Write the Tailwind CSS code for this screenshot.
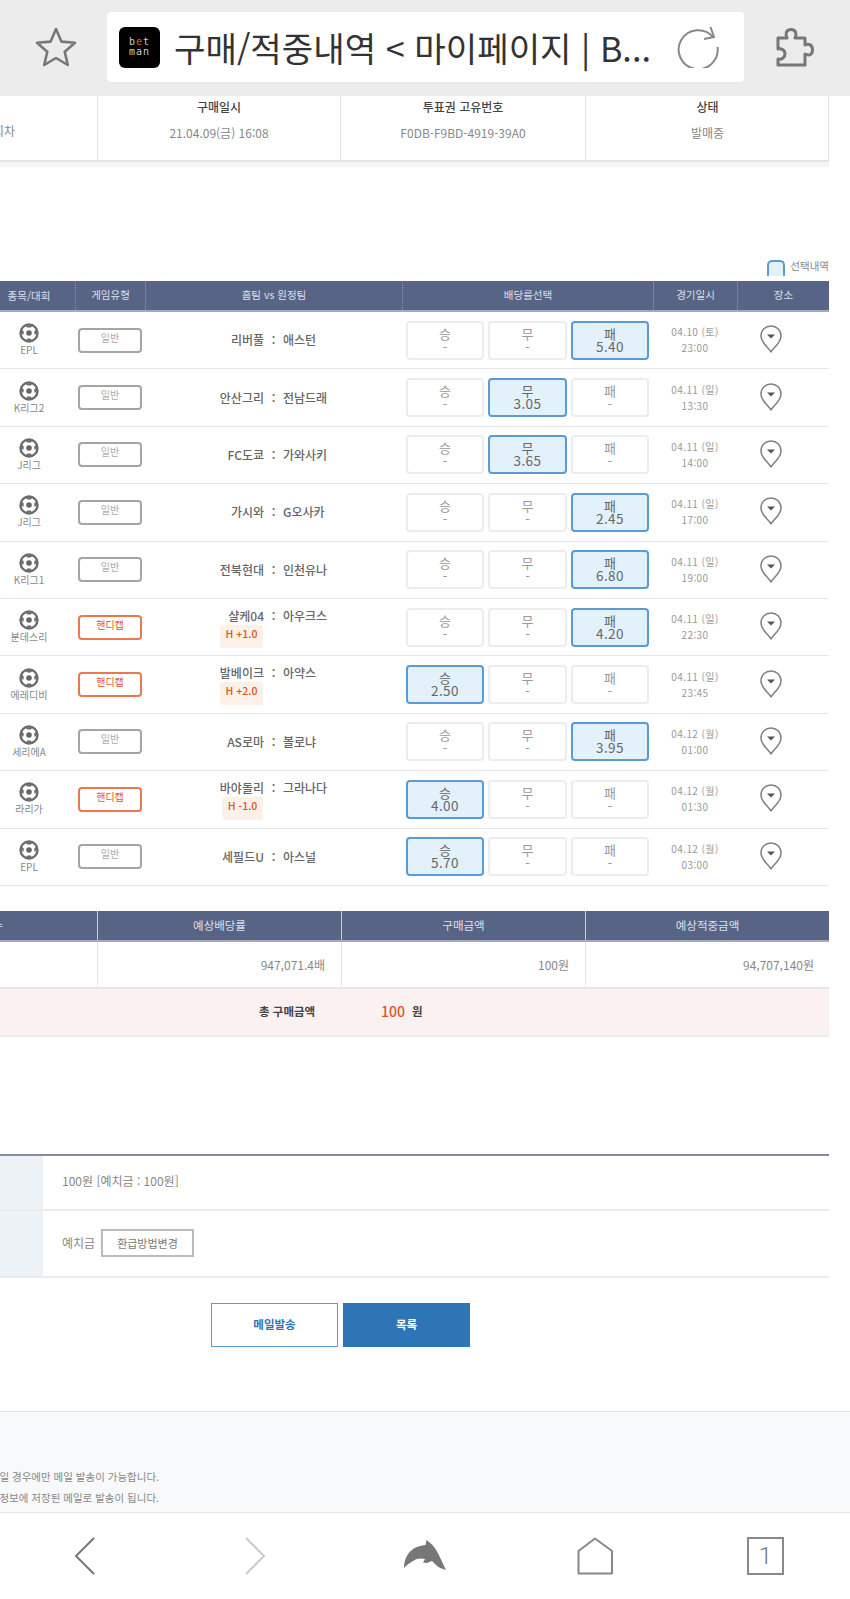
<!DOCTYPE html>
<html lang="ko">
  <head>
    <meta charset="UTF-8" />
    <meta name="viewport" content="width=device-width, initial-scale=1.0" />
    <title>구매/적중내역 &lt; 마이페이지 | Betman</title>
    <script src="https://cdn.jsdelivr.net/npm/@tailwindcss/browser@4"></script>
  </head>
  <body class="bg-white">
    <svg class="hidden">
      <symbol id="ball" viewBox="0 0 20 20">
        <circle cx="10" cy="10" r="8.5" fill="#fff" stroke="#6b6b6b" stroke-width="2.4" />
        <circle cx="10" cy="10" r="2.8" fill="#666" />
        <path d="M6.500 2.500 L8.200 4.500 H11.800 L13.500 2.500 Z M2 10 L3.400 7 L4.800 8.500 L4.400 12 Z M18 10 L16.600 7 L15.200 8.500 L15.600 12 Z M7 17.400 L8.300 15.500 H11.700 L13 17.400 Z" fill="#6b6b6b" />
      </symbol>
      <symbol id="pin" viewBox="0 0 22 28">
        <path d="M11 27 C8.500 22.500 1 18 1 11 C1 5 5.500 1 11 1 C16.500 1 21 5 21 11 C21 18 13.500 22.500 11 27 Z" fill="#fff" stroke="#808080" stroke-width="1.500" stroke-linejoin="round" />
        <path d="M7 9.500 H15 L11 13.500 Z" fill="#555" />
      </symbol>
    </svg>

    <div class="w-[850px] h-[1599px] overflow-hidden flex flex-col text-[#888] font-['Noto_Sans_CJK_KR','Noto_Sans',sans-serif]">
      <!-- Browser toolbar -->
      <header class="h-[96px] shrink-0 bg-[#ececec] flex items-center pb-[2px]">
        <svg class="ml-[35px] w-[42px] h-[42px]" viewBox="0 0 42 42" fill="none" stroke="#777" stroke-width="2.6" stroke-linejoin="round">
          <path d="M21 3 L26.400 15.600 L40 16.800 L29.700 25.800 L32.800 39 L21 32 L9.200 39 L12.300 25.800 L2 16.800 L15.600 15.600 Z" />
        </svg>
        <div class="ml-[30px] w-[637px] h-[70px] bg-white rounded-[4px] flex items-center pl-[12px]">
          <div class="w-[41px] h-[41px] bg-black rounded-[6px] flex flex-col items-center justify-center font-['DejaVu_Sans_Mono',monospace] text-[10px] leading-[10px] text-[#ccc] tracking-[1px]">
            <span>b<span class="text-[#e0531f]">e</span>t</span>
            <span>man</span>
          </div>
          <span class="ml-[14px] w-[505px] text-[34.2px] leading-[44px] text-[#333] whitespace-nowrap">구매/적중내역 &lt; 마이페이지 | B...</span>
          <svg class="-ml-[2px] w-[42px] h-[42px]" viewBox="0 0 42 42" fill="none" stroke="#888" stroke-width="2">
            <path d="M40.500 21 A19.500 19.500 0 1 1 36 11" />
            <path d="M33.500 1 L37 11 L27 13" />
          </svg>
        </div>
        <svg class="ml-[32px] w-[38px] h-[39px]" viewBox="0 0 38 39" fill="none" stroke="#777" stroke-width="3" stroke-linejoin="round">
          <path d="M2 10 H11 C9 6 10 1.500 15 1.500 C20 1.500 21 6 19 10 H29 V17 C33 15 36.500 17 36.500 22 C36.500 27 33 28 29 26 V37 H2 V31 C6 32 9 29 9 26 C9 22 5 20 2 21 Z" />
        </svg>
      </header>

      <!-- Ticket summary -->
      <section class="w-[829px] shrink-0 h-[66px] grid grid-cols-[97px_243px_245px_244px] border-b-2 border-r border-[#e6e6e6] text-center">
        <div class="flex justify-end items-end pb-[20px] pr-[82px] text-[12px] whitespace-nowrap">회차</div>
        <div class="border-l border-[#e6e6e6]">
          <p class="mt-[2px] text-[12px] leading-[18px] font-medium text-[#444]">구매일시</p>
          <p class="mt-[8px] text-[12px] leading-[18px]">21.04.09(금) 16:08</p>
        </div>
        <div class="border-l border-[#e6e6e6]">
          <p class="mt-[2px] text-[12px] leading-[18px] font-medium text-[#444]">투표권 고유번호</p>
          <p class="mt-[8px] text-[12px] leading-[18px]">F0DB-F9BD-4919-39A0</p>
        </div>
        <div class="border-l border-[#e6e6e6]">
          <p class="mt-[2px] text-[12px] leading-[18px] font-medium text-[#444]">상태</p>
          <p class="mt-[8px] text-[12px] leading-[18px]">발매중</p>
        </div>
      </section>
      <div class="w-[829px] shrink-0 h-[5px] bg-[#f6f6f6]"></div>

      <!-- Legend -->
      <div class="w-[829px] shrink-0 mt-[93px] h-[21px] flex justify-end items-start gap-[5px] text-[10.5px] leading-[14px]">
        <span class="w-[18px] h-[16px] bg-[#e3f1fb] border-2 border-b-0 border-[#5b9bd5] rounded-t-[5px]"></span>
        <span class="-mt-[1px]">선택내역</span>
      </div>

      <!-- Match table -->
      <section class="w-[829px] shrink-0">
        <div class="h-[31px] grid grid-cols-[75px_70px_257px_251px_84px_92px] bg-[#586485] border-b-2 border-[#a5abbf] text-[10.5px] text-[#dde0e8] text-center items-center">
          <div class="w-[58px]">종목/대회</div>
          <div class="h-full leading-[28px] border-l border-dotted border-[#8a93ad]">게임유형</div>
          <div class="h-full leading-[28px] border-l border-[#77819f]">홈팀 vs 원정팀</div>
          <div class="h-full leading-[28px] border-l border-dotted border-[#8a93ad]">배당률선택</div>
          <div class="h-full leading-[28px] border-l border-[#77819f]">경기일시</div>
          <div class="h-full leading-[28px] border-l border-[#77819f]">장소</div>
        </div>

        <!-- 1 -->
        <div class="h-[57.4px] grid grid-cols-[75px_70px_257px_251px_84px_92px] items-center border-b border-[#e6e6e6]">
          <div class="w-[58px] flex flex-col items-center"><svg class="w-[20px] h-[20px]"><use href="#ball" /></svg><span class="text-[10px] leading-[14px]">EPL</span></div>
          <div class="pl-[3px]"><div class="w-[64px] h-[25px] border-2 border-[#a5a5a5] rounded-[4px] text-[10px] leading-[16px] text-center text-[#aaa]">일반</div></div>
          <div class="flex justify-center text-[12px] font-medium text-[#666]"><span class="w-[119px] text-right">리버풀</span><span class="w-[19px] text-center">:</span><span class="w-[119px]">애스턴</span></div>
          <div class="flex gap-[4px] pl-[4px] text-center text-[13px] leading-[13px]">
            <div class="w-[78px] h-[39px] border-2 border-[#ececec] rounded-[4px] pt-[4px] text-[#999]">승<br />-</div>
            <div class="w-[79px] h-[39px] border-2 border-[#ececec] rounded-[4px] pt-[4px] text-[#999]">무<br />-</div>
            <div class="w-[78px] h-[39px] border-2 border-[#5b9bd5] rounded-[4px] pt-[4px] bg-[#e3f1fb] text-[#666]">패<br /><span class="text-[13.5px] tracking-[0.4px]">5.40</span></div>
          </div>
          <div class="text-center text-[10px] leading-[16px] tracking-[0.4px] text-[#999]">04.10 (토)<br />23:00</div>
          <div class="flex justify-center pb-[2px]"><svg class="w-[22px] h-[28px] -ml-[24px]"><use href="#pin" /></svg></div>
        </div>
        <!-- 2 -->
        <div class="h-[57.4px] grid grid-cols-[75px_70px_257px_251px_84px_92px] items-center border-b border-[#e6e6e6]">
          <div class="w-[58px] flex flex-col items-center"><svg class="w-[20px] h-[20px]"><use href="#ball" /></svg><span class="text-[10px] leading-[14px]">K리그2</span></div>
          <div class="pl-[3px]"><div class="w-[64px] h-[25px] border-2 border-[#a5a5a5] rounded-[4px] text-[10px] leading-[16px] text-center text-[#aaa]">일반</div></div>
          <div class="flex justify-center text-[12px] font-medium text-[#666]"><span class="w-[119px] text-right">안산그리</span><span class="w-[19px] text-center">:</span><span class="w-[119px]">전남드래</span></div>
          <div class="flex gap-[4px] pl-[4px] text-center text-[13px] leading-[13px]">
            <div class="w-[78px] h-[39px] border-2 border-[#ececec] rounded-[4px] pt-[4px] text-[#999]">승<br />-</div>
            <div class="w-[79px] h-[39px] border-2 border-[#5b9bd5] rounded-[4px] pt-[4px] bg-[#e3f1fb] text-[#666]">무<br /><span class="text-[13.5px] tracking-[0.4px]">3.05</span></div>
            <div class="w-[78px] h-[39px] border-2 border-[#ececec] rounded-[4px] pt-[4px] text-[#999]">패<br />-</div>
          </div>
          <div class="text-center text-[10px] leading-[16px] tracking-[0.4px] text-[#999]">04.11 (일)<br />13:30</div>
          <div class="flex justify-center pb-[2px]"><svg class="w-[22px] h-[28px] -ml-[24px]"><use href="#pin" /></svg></div>
        </div>
        <!-- 3 -->
        <div class="h-[57.4px] grid grid-cols-[75px_70px_257px_251px_84px_92px] items-center border-b border-[#e6e6e6]">
          <div class="w-[58px] flex flex-col items-center"><svg class="w-[20px] h-[20px]"><use href="#ball" /></svg><span class="text-[10px] leading-[14px]">J리그</span></div>
          <div class="pl-[3px]"><div class="w-[64px] h-[25px] border-2 border-[#a5a5a5] rounded-[4px] text-[10px] leading-[16px] text-center text-[#aaa]">일반</div></div>
          <div class="flex justify-center text-[12px] font-medium text-[#666]"><span class="w-[119px] text-right">FC도쿄</span><span class="w-[19px] text-center">:</span><span class="w-[119px]">가와사키</span></div>
          <div class="flex gap-[4px] pl-[4px] text-center text-[13px] leading-[13px]">
            <div class="w-[78px] h-[39px] border-2 border-[#ececec] rounded-[4px] pt-[4px] text-[#999]">승<br />-</div>
            <div class="w-[79px] h-[39px] border-2 border-[#5b9bd5] rounded-[4px] pt-[4px] bg-[#e3f1fb] text-[#666]">무<br /><span class="text-[13.5px] tracking-[0.4px]">3.65</span></div>
            <div class="w-[78px] h-[39px] border-2 border-[#ececec] rounded-[4px] pt-[4px] text-[#999]">패<br />-</div>
          </div>
          <div class="text-center text-[10px] leading-[16px] tracking-[0.4px] text-[#999]">04.11 (일)<br />14:00</div>
          <div class="flex justify-center pb-[2px]"><svg class="w-[22px] h-[28px] -ml-[24px]"><use href="#pin" /></svg></div>
        </div>
        <!-- 4 -->
        <div class="h-[57.4px] grid grid-cols-[75px_70px_257px_251px_84px_92px] items-center border-b border-[#e6e6e6]">
          <div class="w-[58px] flex flex-col items-center"><svg class="w-[20px] h-[20px]"><use href="#ball" /></svg><span class="text-[10px] leading-[14px]">J리그</span></div>
          <div class="pl-[3px]"><div class="w-[64px] h-[25px] border-2 border-[#a5a5a5] rounded-[4px] text-[10px] leading-[16px] text-center text-[#aaa]">일반</div></div>
          <div class="flex justify-center text-[12px] font-medium text-[#666]"><span class="w-[119px] text-right">가시와</span><span class="w-[19px] text-center">:</span><span class="w-[119px]">G오사카</span></div>
          <div class="flex gap-[4px] pl-[4px] text-center text-[13px] leading-[13px]">
            <div class="w-[78px] h-[39px] border-2 border-[#ececec] rounded-[4px] pt-[4px] text-[#999]">승<br />-</div>
            <div class="w-[79px] h-[39px] border-2 border-[#ececec] rounded-[4px] pt-[4px] text-[#999]">무<br />-</div>
            <div class="w-[78px] h-[39px] border-2 border-[#5b9bd5] rounded-[4px] pt-[4px] bg-[#e3f1fb] text-[#666]">패<br /><span class="text-[13.5px] tracking-[0.4px]">2.45</span></div>
          </div>
          <div class="text-center text-[10px] leading-[16px] tracking-[0.4px] text-[#999]">04.11 (일)<br />17:00</div>
          <div class="flex justify-center pb-[2px]"><svg class="w-[22px] h-[28px] -ml-[24px]"><use href="#pin" /></svg></div>
        </div>
        <!-- 5 -->
        <div class="h-[57.4px] grid grid-cols-[75px_70px_257px_251px_84px_92px] items-center border-b border-[#e6e6e6]">
          <div class="w-[58px] flex flex-col items-center"><svg class="w-[20px] h-[20px]"><use href="#ball" /></svg><span class="text-[10px] leading-[14px]">K리그1</span></div>
          <div class="pl-[3px]"><div class="w-[64px] h-[25px] border-2 border-[#a5a5a5] rounded-[4px] text-[10px] leading-[16px] text-center text-[#aaa]">일반</div></div>
          <div class="flex justify-center text-[12px] font-medium text-[#666]"><span class="w-[119px] text-right">전북현대</span><span class="w-[19px] text-center">:</span><span class="w-[119px]">인천유나</span></div>
          <div class="flex gap-[4px] pl-[4px] text-center text-[13px] leading-[13px]">
            <div class="w-[78px] h-[39px] border-2 border-[#ececec] rounded-[4px] pt-[4px] text-[#999]">승<br />-</div>
            <div class="w-[79px] h-[39px] border-2 border-[#ececec] rounded-[4px] pt-[4px] text-[#999]">무<br />-</div>
            <div class="w-[78px] h-[39px] border-2 border-[#5b9bd5] rounded-[4px] pt-[4px] bg-[#e3f1fb] text-[#666]">패<br /><span class="text-[13.5px] tracking-[0.4px]">6.80</span></div>
          </div>
          <div class="text-center text-[10px] leading-[16px] tracking-[0.4px] text-[#999]">04.11 (일)<br />19:00</div>
          <div class="flex justify-center pb-[2px]"><svg class="w-[22px] h-[28px] -ml-[24px]"><use href="#pin" /></svg></div>
        </div>
        <!-- 6 -->
        <div class="h-[57.4px] grid grid-cols-[75px_70px_257px_251px_84px_92px] items-center border-b border-[#e6e6e6]">
          <div class="w-[58px] flex flex-col items-center"><svg class="w-[20px] h-[20px]"><use href="#ball" /></svg><span class="text-[10px] leading-[14px]">분데스리</span></div>
          <div class="pl-[3px]"><div class="w-[64px] h-[25px] border-2 border-[#e87a4d] rounded-[4px] text-[10px] leading-[16px] text-center text-[#e0531f]">핸디캡</div></div>
          <div class="text-[12px] font-medium text-[#666]">
            <div class="flex justify-center"><span class="w-[119px] text-right">샬케04</span><span class="w-[19px] text-center">:</span><span class="w-[119px]">아우크스</span></div>
            <div class="ml-[75px] w-[43px] h-[23px] bg-[#fbf1e8] rounded-[3px] text-[10.5px] leading-[17px] text-center text-[#e0531f]">H +1.0</div>
          </div>
          <div class="flex gap-[4px] pl-[4px] text-center text-[13px] leading-[13px]">
            <div class="w-[78px] h-[39px] border-2 border-[#ececec] rounded-[4px] pt-[4px] text-[#999]">승<br />-</div>
            <div class="w-[79px] h-[39px] border-2 border-[#ececec] rounded-[4px] pt-[4px] text-[#999]">무<br />-</div>
            <div class="w-[78px] h-[39px] border-2 border-[#5b9bd5] rounded-[4px] pt-[4px] bg-[#e3f1fb] text-[#666]">패<br /><span class="text-[13.5px] tracking-[0.4px]">4.20</span></div>
          </div>
          <div class="text-center text-[10px] leading-[16px] tracking-[0.4px] text-[#999]">04.11 (일)<br />22:30</div>
          <div class="flex justify-center pb-[2px]"><svg class="w-[22px] h-[28px] -ml-[24px]"><use href="#pin" /></svg></div>
        </div>
        <!-- 7 -->
        <div class="h-[57.4px] grid grid-cols-[75px_70px_257px_251px_84px_92px] items-center border-b border-[#e6e6e6]">
          <div class="w-[58px] flex flex-col items-center"><svg class="w-[20px] h-[20px]"><use href="#ball" /></svg><span class="text-[10px] leading-[14px]">에레디비</span></div>
          <div class="pl-[3px]"><div class="w-[64px] h-[25px] border-2 border-[#e87a4d] rounded-[4px] text-[10px] leading-[16px] text-center text-[#e0531f]">핸디캡</div></div>
          <div class="text-[12px] font-medium text-[#666]">
            <div class="flex justify-center"><span class="w-[119px] text-right">발베이크</span><span class="w-[19px] text-center">:</span><span class="w-[119px]">아약스</span></div>
            <div class="ml-[75px] w-[43px] h-[23px] bg-[#fbf1e8] rounded-[3px] text-[10.5px] leading-[17px] text-center text-[#e0531f]">H +2.0</div>
          </div>
          <div class="flex gap-[4px] pl-[4px] text-center text-[13px] leading-[13px]">
            <div class="w-[78px] h-[39px] border-2 border-[#5b9bd5] rounded-[4px] pt-[4px] bg-[#e3f1fb] text-[#666]">승<br /><span class="text-[13.5px] tracking-[0.4px]">2.50</span></div>
            <div class="w-[79px] h-[39px] border-2 border-[#ececec] rounded-[4px] pt-[4px] text-[#999]">무<br />-</div>
            <div class="w-[78px] h-[39px] border-2 border-[#ececec] rounded-[4px] pt-[4px] text-[#999]">패<br />-</div>
          </div>
          <div class="text-center text-[10px] leading-[16px] tracking-[0.4px] text-[#999]">04.11 (일)<br />23:45</div>
          <div class="flex justify-center pb-[2px]"><svg class="w-[22px] h-[28px] -ml-[24px]"><use href="#pin" /></svg></div>
        </div>
        <!-- 8 -->
        <div class="h-[57.4px] grid grid-cols-[75px_70px_257px_251px_84px_92px] items-center border-b border-[#e6e6e6]">
          <div class="w-[58px] flex flex-col items-center"><svg class="w-[20px] h-[20px]"><use href="#ball" /></svg><span class="text-[10px] leading-[14px]">세리에A</span></div>
          <div class="pl-[3px]"><div class="w-[64px] h-[25px] border-2 border-[#a5a5a5] rounded-[4px] text-[10px] leading-[16px] text-center text-[#aaa]">일반</div></div>
          <div class="flex justify-center text-[12px] font-medium text-[#666]"><span class="w-[119px] text-right">AS로마</span><span class="w-[19px] text-center">:</span><span class="w-[119px]">볼로냐</span></div>
          <div class="flex gap-[4px] pl-[4px] text-center text-[13px] leading-[13px]">
            <div class="w-[78px] h-[39px] border-2 border-[#ececec] rounded-[4px] pt-[4px] text-[#999]">승<br />-</div>
            <div class="w-[79px] h-[39px] border-2 border-[#ececec] rounded-[4px] pt-[4px] text-[#999]">무<br />-</div>
            <div class="w-[78px] h-[39px] border-2 border-[#5b9bd5] rounded-[4px] pt-[4px] bg-[#e3f1fb] text-[#666]">패<br /><span class="text-[13.5px] tracking-[0.4px]">3.95</span></div>
          </div>
          <div class="text-center text-[10px] leading-[16px] tracking-[0.4px] text-[#999]">04.12 (월)<br />01:00</div>
          <div class="flex justify-center pb-[2px]"><svg class="w-[22px] h-[28px] -ml-[24px]"><use href="#pin" /></svg></div>
        </div>
        <!-- 9 -->
        <div class="h-[57.4px] grid grid-cols-[75px_70px_257px_251px_84px_92px] items-center border-b border-[#e6e6e6]">
          <div class="w-[58px] flex flex-col items-center"><svg class="w-[20px] h-[20px]"><use href="#ball" /></svg><span class="text-[10px] leading-[14px]">라리가</span></div>
          <div class="pl-[3px]"><div class="w-[64px] h-[25px] border-2 border-[#e87a4d] rounded-[4px] text-[10px] leading-[16px] text-center text-[#e0531f]">핸디캡</div></div>
          <div class="text-[12px] font-medium text-[#666]">
            <div class="flex justify-center"><span class="w-[119px] text-right">바야돌리</span><span class="w-[19px] text-center">:</span><span class="w-[119px]">그라나다</span></div>
            <div class="ml-[77px] w-[41px] h-[23px] bg-[#fbf1e8] rounded-[3px] text-[10.5px] leading-[17px] text-center text-[#e0531f]">H -1.0</div>
          </div>
          <div class="flex gap-[4px] pl-[4px] text-center text-[13px] leading-[13px]">
            <div class="w-[78px] h-[39px] border-2 border-[#5b9bd5] rounded-[4px] pt-[4px] bg-[#e3f1fb] text-[#666]">승<br /><span class="text-[13.5px] tracking-[0.4px]">4.00</span></div>
            <div class="w-[79px] h-[39px] border-2 border-[#ececec] rounded-[4px] pt-[4px] text-[#999]">무<br />-</div>
            <div class="w-[78px] h-[39px] border-2 border-[#ececec] rounded-[4px] pt-[4px] text-[#999]">패<br />-</div>
          </div>
          <div class="text-center text-[10px] leading-[16px] tracking-[0.4px] text-[#999]">04.12 (월)<br />01:30</div>
          <div class="flex justify-center pb-[2px]"><svg class="w-[22px] h-[28px] -ml-[24px]"><use href="#pin" /></svg></div>
        </div>
        <!-- 10 -->
        <div class="h-[57.4px] grid grid-cols-[75px_70px_257px_251px_84px_92px] items-center border-b border-[#e6e6e6]">
          <div class="w-[58px] flex flex-col items-center"><svg class="w-[20px] h-[20px]"><use href="#ball" /></svg><span class="text-[10px] leading-[14px]">EPL</span></div>
          <div class="pl-[3px]"><div class="w-[64px] h-[25px] border-2 border-[#a5a5a5] rounded-[4px] text-[10px] leading-[16px] text-center text-[#aaa]">일반</div></div>
          <div class="flex justify-center text-[12px] font-medium text-[#666]"><span class="w-[119px] text-right">세필드U</span><span class="w-[19px] text-center">:</span><span class="w-[119px]">아스널</span></div>
          <div class="flex gap-[4px] pl-[4px] text-center text-[13px] leading-[13px]">
            <div class="w-[78px] h-[39px] border-2 border-[#5b9bd5] rounded-[4px] pt-[4px] bg-[#e3f1fb] text-[#666]">승<br /><span class="text-[13.5px] tracking-[0.4px]">5.70</span></div>
            <div class="w-[79px] h-[39px] border-2 border-[#ececec] rounded-[4px] pt-[4px] text-[#999]">무<br />-</div>
            <div class="w-[78px] h-[39px] border-2 border-[#ececec] rounded-[4px] pt-[4px] text-[#999]">패<br />-</div>
          </div>
          <div class="text-center text-[10px] leading-[16px] tracking-[0.4px] text-[#999]">04.12 (월)<br />03:00</div>
          <div class="flex justify-center pb-[2px]"><svg class="w-[22px] h-[28px] -ml-[24px]"><use href="#pin" /></svg></div>
        </div>
      </section>

      <!-- Purchase totals -->
      <section class="w-[829px] shrink-0 mt-[25px] text-[11.5px]">
        <div class="h-[31px] grid grid-cols-[97px_244px_244px_244px] bg-[#586485] border-b-2 border-[#a5abbf] text-[#dde0e8] text-center leading-[28px]">
          <div class="flex justify-end pr-[94px] whitespace-nowrap">조합수</div>
          <div class="border-l border-[#c8ccd8]">예상배당률</div>
          <div class="border-l border-[#c8ccd8]">구매금액</div>
          <div class="border-l border-[#c8ccd8]">예상적중금액</div>
        </div>
        <div class="h-[47px] grid grid-cols-[97px_244px_244px_244px] border-b-2 border-[#e6e6e6] text-[12px] leading-[45px] text-right">
          <div></div>
          <div class="border-l border-[#e6e6e6] pr-[16px]">947,071.4배</div>
          <div class="border-l border-[#e6e6e6] pr-[16px]">100원</div>
          <div class="border-l border-[#e6e6e6] pr-[15px]">94,707,140원</div>
        </div>
        <div class="h-[48px] bg-[#fbf1f1] border-b-2 border-[#ececec] flex items-center pl-[259px] text-[11.5px] font-bold text-[#444]">
          <span class="w-[122px]">총 구매금액</span>
          <span class="w-[31px] text-[14px] font-medium text-[#e0531f]">100</span>
          <span>원</span>
        </div>
      </section>

      <!-- Payment -->
      <section class="w-[829px] shrink-0 mt-[117px] border-t-2 border-[#858ba3] text-[12px]">
        <div class="h-[55px] flex border-b-2 border-[#ececec]">
          <div class="w-[43px] bg-[#edf2f7]"></div>
          <div class="pl-[19px] leading-[50px]">100원 [예치금 : 100원]</div>
        </div>
        <div class="h-[67px] flex items-center border-b-2 border-[#ececec]">
          <div class="w-[43px] h-full bg-[#edf2f7]"></div>
          <div class="pl-[19px] w-[58px]">예치금</div>
          <button class="w-[93px] h-[28px] border-2 border-[#bbb] text-[11px] text-[#777]">환급방법변경</button>
        </div>
      </section>

      <div class="shrink-0 mt-[25px] flex gap-[5px] pl-[211px]">
        <button class="w-[127px] h-[44px] border border-[#5b9bd5] text-[11.5px] font-bold text-[#2e75b6]">메일발송</button>
        <button class="w-[127px] h-[44px] bg-[#2e75b6] text-[11.5px] font-bold text-white">목록</button>
      </div>

      <!-- Notice -->
      <section class="shrink-0 mt-[64px] h-[102px] bg-[#f8f9fa] border-y border-[#e3e3e3] flex flex-col items-end pr-[691px] pt-[54px] text-[10.5px] leading-[21px] whitespace-nowrap">
        <p>구매내역은 이메일이 등록된 회원일 경우에만 메일 발송이 가능합니다.</p>
        <p>메일 발송은 회원정보에 저장된 메일로 발송이 됩니다.</p>
      </section>

      <!-- Browser bottom bar -->
      <nav class="flex-1 bg-white flex items-start pt-[24px]">
        <svg class="ml-[74px] w-[22px] h-[38px]" viewBox="0 0 22 38" fill="none" stroke="#777" stroke-width="2"><path d="M20 1 L2 19 L20 37" /></svg>
        <svg class="ml-[148px] w-[22px] h-[38px]" viewBox="0 0 22 38" fill="none" stroke="#ccc" stroke-width="2"><path d="M2 1 L20 19 L2 37" /></svg>
        <svg class="ml-[124px] -mt-[12px] w-[70px] h-[60px]" viewBox="0 0 70 60" fill="#777">
          <path d="M14 43 C14 33 19 25 27 22 C30 21 33 20 35.500 20 L36.500 15 L42 19.500 L44 22 C48 27 52 37 56 45 C52 44 48 42 46 40 L42 36 L37 38 L33 37.500 L35 34 C31 33 27 33 23 36 C19 38 16 41 14 43 Z" />
        </svg>
        <svg class="ml-[117px] w-[38px] h-[38px]" viewBox="0 0 38 38" fill="none" stroke="#888" stroke-width="2" stroke-linejoin="round"><path d="M18 1.500 L35 14 V36.500 H1.500 V14 Z" /></svg>
        <div class="ml-[132px] w-[37px] h-[38px] border-2 border-[#888] text-center font-['Roboto',sans-serif] text-[24px] font-light leading-[34px] text-[#777]">1</div>
      </nav>
    </div>
  </body>
</html>
